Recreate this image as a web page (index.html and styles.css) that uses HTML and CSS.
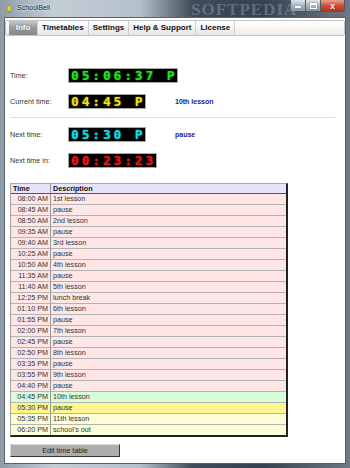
FILE: index.html
```html
<!DOCTYPE html>
<html lang="en">
<head>
    <meta charset="UTF-8">
    <meta name="viewport" content="width=device-width, initial-scale=1.0">
    <title>SchoolBell</title>
    <link rel="stylesheet" href="styles.css">
</head>
<body>
    <div class="window">
        <div class="titlebar">
            <svg class="app-icon" width="6" height="8" viewBox="0 0 6 8">
                <path d="M3 0.5 C1.4 0.5 1 2 1 3.5 L1 5.5 L0 6.5 L6 6.5 L5 5.5 L5 3.5 C5 2 4.6 0.5 3 0.5 Z" fill="#e8d43a" stroke="#8a7a10" stroke-width="0.5"/>
                <circle cx="3" cy="7.3" r="0.7" fill="#8a7a10"/>
            </svg>
            <span class="title">SchoolBell</span>
            <span class="watermark">SOFTPEDIA</span>
            <div class="caption-buttons">
                <span class="cap-btn cap-min"><i></i></span>
                <span class="cap-btn cap-max"><i></i></span>
                <span class="cap-btn cap-close">x</span>
            </div>
        </div>

        <div class="client">
            <div class="tabs">
                <span class="tab active">Info</span>
                <span class="tab">Timetables</span>
                <span class="tab">Settings</span>
                <span class="tab">Help &amp; Support</span>
                <span class="tab">License</span>
            </div>

            <div class="page">
                <div class="clock-row first">
                    <span class="label">Time:</span>
                    <span class="lcd lcd-green">05:06:37 P</span>
                    <span class="info"></span>
                </div>
                <div class="clock-row">
                    <span class="label">Current time:</span>
                    <span class="lcd lcd-yellow">04:45 P</span>
                    <span class="info">10th lesson</span>
                </div>

                <div class="divider"></div>

                <div class="clock-row next">
                    <span class="label">Next time:</span>
                    <span class="lcd lcd-cyan">05:30 P</span>
                    <span class="info">pause</span>
                </div>
                <div class="clock-row">
                    <span class="label">Next time in:</span>
                    <span class="lcd lcd-red">00:23:23</span>
                    <span class="info"></span>
                </div>

                <table class="timetable">
                    <colgroup>
                        <col class="col-time">
                        <col>
                    </colgroup>
                    <thead>
                        <tr><th class="time-head">Time</th><th>Description</th></tr>
                    </thead>
                    <tbody>
                        <tr><td class="time">08:00 AM</td><td>1st lesson</td></tr>
                        <tr><td class="time">08:45 AM</td><td>pause</td></tr>
                        <tr><td class="time">08:50 AM</td><td>2nd lesson</td></tr>
                        <tr><td class="time">09:35 AM</td><td>pause</td></tr>
                        <tr><td class="time">09:40 AM</td><td>3rd lesson</td></tr>
                        <tr><td class="time">10:25 AM</td><td>pause</td></tr>
                        <tr><td class="time">10:50 AM</td><td>4th lesson</td></tr>
                        <tr><td class="time">11:35 AM</td><td>pause</td></tr>
                        <tr><td class="time">11:40 AM</td><td>5th lesson</td></tr>
                        <tr><td class="time">12:25 PM</td><td>lunch break</td></tr>
                        <tr><td class="time">01:10 PM</td><td>6th lesson</td></tr>
                        <tr><td class="time">01:55 PM</td><td>pause</td></tr>
                        <tr><td class="time">02:00 PM</td><td>7th lesson</td></tr>
                        <tr><td class="time">02:45 PM</td><td>pause</td></tr>
                        <tr><td class="time">02:50 PM</td><td>8th lesson</td></tr>
                        <tr><td class="time">03:35 PM</td><td>pause</td></tr>
                        <tr><td class="time">03:55 PM</td><td>9th lesson</td></tr>
                        <tr><td class="time">04:40 PM</td><td>pause</td></tr>
                        <tr class="current"><td class="time">04:45 PM</td><td>10th lesson</td></tr>
                        <tr class="next"><td class="time">05:30 PM</td><td>pause</td></tr>
                        <tr class="later"><td class="time">05:35 PM</td><td>11th lesson</td></tr>
                        <tr class="later"><td class="time">06:20 PM</td><td>school's out</td></tr>
                    </tbody>
                </table>

                <button class="edit-btn">Edit time table</button>
            </div>
        </div>
    </div>
</body>
</html>
```

FILE: styles.css
```css
body {
    margin: 0;
    font-family: "Liberation Sans", Arial, sans-serif;
    background: #5a6672;
}
.window {
    width: 350px;
    height: 468px;
    display: flex;
    flex-direction: column;
    box-sizing: border-box;
    padding: 0 5px 5px 5px;
    background: linear-gradient(to right, #8f9ca8 0%, #c3cdd6 15%, #b4c0ca 40%, #3f4c59 55%, #34414e 75%, #6d7a86 100%);
}
.titlebar {
    position: relative;
    height: 18px;
    display: flex;
    align-items: flex-start;
}
.app-icon {
    margin: 5px 0 0 1px;
}
.title {
    margin: 4px 0 0 5px;
    font-size: 7px;
    color: #111;
    text-shadow: 0 0 3px #fff, 0 0 2px #fff;
}
.watermark {
    position: absolute;
    left: 186px;
    top: 0;
    font-family: "Liberation Serif", serif;
    font-weight: bold;
    font-size: 17px;
    letter-spacing: 1px;
    color: rgba(150, 165, 180, 0.45);
}
.caption-buttons {
    display: flex;
    margin-left: auto;
    margin-right: 0;
}
.cap-btn {
    height: 11px;
    width: 14px;
    display: flex;
    align-items: center;
    justify-content: center;
    border: 1px solid #4b5866;
    border-top: none;
    background: linear-gradient(#dfe5ea, #a5b0ba 55%, #8c98a4);
}
.cap-min {
    border-radius: 0 0 0 3px;
}
.cap-min i {
    width: 6px;
    height: 2px;
    margin-top: 3px;
    background: #fff;
    box-shadow: 0 0 1px #333;
}
.cap-max {
    border-left: none;
}
.cap-max i {
    width: 5px;
    height: 3px;
    border: 1px solid #fff;
    border-top-width: 2px;
    box-shadow: 0 0 1px #333;
}
.cap-close {
    width: 23px;
    border-left: none;
    border-radius: 0 0 3px 0;
    background: linear-gradient(#e9a090, #d0513a 50%, #b83220);
    color: #fff;
    font-size: 9px;
    font-weight: bold;
    line-height: 10px;
    text-shadow: 0 0 1px #400;
}
.client {
    flex: 1;
    background: white;
    box-shadow: 0 0 0 1px #56626e;
}
.tabs {
    display: flex;
    height: 16px;
    box-sizing: border-box;
    margin-top: 2px;
    padding-left: 3px;
    border: 1px solid #c4c4c4;
    border-radius: 2px;
    background: linear-gradient(#ffffff, #ececec);
}
.tab {
    padding: 0 4px;
    font-size: 8px;
    font-weight: bold;
    line-height: 14px;
    color: #111;
    border-right: 1px solid #cfcfcf;
    background: linear-gradient(#ffffff, #e6e6e6);
}
.tab.active {
    min-width: 20px;
    color: #fff;
    text-align: center;
    background: linear-gradient(#c8c8c8, #9a9a9a 50%, #888);
    text-shadow: 0 0 2px #666;
}
.page {
    padding: 0 10px 0 5px;
}
.clock-row {
    display: grid;
    grid-template-columns: 58px 107px auto;
    align-items: center;
    height: 15px;
    margin-top: 11px;
}
.clock-row.first {
    margin-top: 32px;
}
.clock-row.next {
    margin-top: 9px;
}
.label {
    font-size: 7.2px;
    color: #333;
}
.lcd {
    justify-self: start;
    height: 15px;
    box-sizing: border-box;
    padding-left: 2px;
    font-family: "DejaVu Sans Mono", monospace;
    font-weight: bold;
    font-size: 13px;
    letter-spacing: 2.8px;
    line-height: 14px;
    white-space: pre;
    background: #000;
    border: 1px solid #a8a8a8;
}
.lcd-green {
    color: #1ee61e;
    text-shadow: 0 0 2px #0a8a0a;
}
.lcd-yellow {
    color: #f0e010;
    text-shadow: 0 0 2px #8a7a00;
}
.lcd-cyan {
    color: #14dfe6;
    text-shadow: 0 0 2px #087a80;
}
.lcd-red {
    color: #f01414;
    text-shadow: 0 0 2px #800808;
}
.info {
    font-size: 7px;
    font-weight: bold;
    color: #1c1c8c;
}
.divider {
    height: 1px;
    margin-top: 8px;
    background: #dcdcdc;
}
.timetable {
    width: 278px;
    margin-top: 15px;
    table-layout: fixed;
    border-spacing: 0;
    border-top: 1px solid #a8a8a8;
    border-left: 1px solid #a8a8a8;
    border-right: 2px solid #222;
    border-bottom: 2px solid #222;
    font-size: 7.2px;
    color: #333;
}
.col-time {
    width: 40px;
}
.timetable th,
.timetable td {
    height: 10px;
    padding: 0 0 0 2px;
    line-height: 10px;
    text-align: left;
    white-space: nowrap;
    border-bottom: 1px solid #b4b4b4;
}
.timetable th {
    height: 9px;
    line-height: 9px;
    font-weight: bold;
    color: #111;
    background: #e4e4fc;
    border-bottom-color: #555;
}
.timetable .time-head {
    border-right: 1px solid #999;
}
.timetable td.time {
    padding: 0 2px 0 0;
    text-align: right;
    border-right: 1px solid #999;
}
.timetable tbody tr {
    background: #ffe6e6;
}
.timetable tbody tr.current {
    background: #d8fdd8;
}
.timetable tbody tr.next {
    background: #fff690;
}
.timetable tbody tr.later {
    background: #fdfdd6;
}
.timetable tbody tr:last-child td {
    border-bottom: none;
}
.edit-btn {
    display: block;
    width: 110px;
    height: 13px;
    margin-top: 7px;
    padding: 0;
    font-family: "Liberation Sans", Arial, sans-serif;
    font-size: 7.2px;
    color: #222;
    background: #adadad;
    border: 1px solid;
    border-color: #d8d8d8 #333 #333 #d8d8d8;
}
```
